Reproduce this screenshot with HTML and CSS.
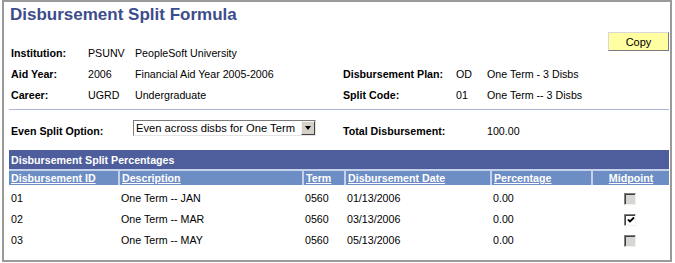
FILE: index.html
```html
<!DOCTYPE html>
<html lang="en">
<head>
    <meta charset="UTF-8">
    <title>Disbursement Split Formula</title>
    <link rel="stylesheet" href="styles.css">
</head>
<body>

    <div class="page">
        <h1 class="page-title">Disbursement Split Formula</h1>

        <div class="info">
            <button type="button" class="copy-btn">Copy</button>

            <span class="label first">Institution:</span>
            <span class="first">PSUNV</span>
            <span class="first">PeopleSoft University</span>

            <span class="label">Aid Year:</span>
            <span>2006</span>
            <span>Financial Aid Year 2005-2006</span>
            <span class="label">Disbursement Plan:</span>
            <span>OD</span>
            <span>One Term - 3 Disbs</span>

            <span class="label">Career:</span>
            <span>UGRD</span>
            <span>Undergraduate</span>
            <span class="label">Split Code:</span>
            <span>01</span>
            <span>One Term -- 3 Disbs</span>
        </div>

        <div class="divider"></div>

        <div class="split-row">
            <span class="label split-label">Even Split Option:</span>
            <div class="dropdown">
                <span class="dropdown-text">Even across disbs for One Term</span>
                <span class="dropdown-arrow"></span>
            </div>
            <span class="label split-label">Total Disbursement:</span>
            <span class="split-label">100.00</span>
        </div>

        <table class="grid">
            <colgroup>
                <col style="width:109px">
                <col style="width:184px">
                <col style="width:42px">
                <col style="width:146px">
                <col style="width:101px">
                <col style="width:78px">
            </colgroup>
            <thead>
                <tr>
                    <th colspan="6" class="grid-title">Disbursement Split Percentages</th>
                </tr>
                <tr class="col-heads">
                    <th><a href="#">Disbursement ID</a></th>
                    <th><a href="#">Description</a></th>
                    <th><a href="#">Term</a></th>
                    <th><a href="#">Disbursement Date</a></th>
                    <th><a href="#">Percentage</a></th>
                    <th class="center"><a href="#">Midpoint</a></th>
                </tr>
            </thead>
            <tbody>
                <tr class="first-row">
                    <td>01</td>
                    <td>One Term -- JAN</td>
                    <td>0560</td>
                    <td>01/13/2006</td>
                    <td>0.00</td>
                    <td class="center"><span class="check disabled"></span></td>
                </tr>
                <tr>
                    <td>02</td>
                    <td>One Term -- MAR</td>
                    <td>0560</td>
                    <td>03/13/2006</td>
                    <td>0.00</td>
                    <td class="center">
                        <span class="check checked">
                            <svg width="8" height="8" viewBox="0 0 8 8"><path d="M1 3.5 L3 5.5 L7 1.5" fill="none" stroke="#000" stroke-width="1.8"/></svg>
                        </span>
                    </td>
                </tr>
                <tr>
                    <td>03</td>
                    <td>One Term -- MAY</td>
                    <td>0560</td>
                    <td>05/13/2006</td>
                    <td>0.00</td>
                    <td class="center"><span class="check disabled"></span></td>
                </tr>
            </tbody>
        </table>
    </div>

</body>
</html>
```

FILE: styles.css
```css
body {
    margin: 0;
    padding: 0;
    background: white;
    font-family: "Liberation Sans", Arial, sans-serif;
    font-size: 10.67px;
    color: black;
}
.page {
    box-sizing: border-box;
    width: 670px;
    height: 262px;
    margin-left: 2px;
    border: 2px solid #9a9a9a;
}
.page-title {
    margin: 0;
    padding: 3px 0 0 6px;
    font-size: 17px;
    line-height: 20px;
    font-weight: bold;
    color: #3d4d8c;
}
.info {
    display: grid;
    grid-template-columns: 77px 47px 208px 113px 31px 1fr;
    grid-template-rows: 32px 21px 21px;
    margin: 7px 0 0 7px;
    line-height: 21px;
}
.info .first {
    grid-row: 1;
    align-self: end;
}
.label {
    font-weight: bold;
}
.copy-btn {
    grid-row: 1;
    grid-column: 4 / -1;
    justify-self: end;
    align-self: start;
    width: 61px;
    height: 19px;
    margin-right: 1px;
    padding: 0;
    font-family: inherit;
    font-size: 11px;
    color: black;
    background: #ffffa2;
    border: 1px solid;
    border-color: #d8d8d8 #7a7a7a #7a7a7a #d8d8d8;
}
.divider {
    height: 1px;
    margin: 3px 1px 0 5px;
    background: #aab4d8;
}
.split-row {
    display: grid;
    grid-template-columns: 122px 210px 144px 1fr;
    align-items: start;
    height: 40px;
    margin-left: 7px;
}
.split-label {
    margin-top: 14px;
    line-height: 14px;
}
.dropdown {
    display: flex;
    box-sizing: border-box;
    width: 183px;
    height: 16px;
    margin-top: 10px;
    border: 1px solid;
    border-color: #7a7a7a #e4e4e4 #e4e4e4 #7a7a7a;
    background: white;
}
.dropdown-text {
    flex: 1;
    padding-left: 2px;
    line-height: 14px;
    font-size: 11.2px;
}
.dropdown-arrow {
    position: relative;
    box-sizing: border-box;
    width: 14px;
    height: 14px;
    background: #d4d0c8;
    border: 1px solid;
    border-color: #f4f4f4 #404040 #404040 #f4f4f4;
}
.dropdown-arrow::after {
    content: "";
    position: absolute;
    left: 3px;
    top: 4px;
    border-left: 3.5px solid transparent;
    border-right: 3.5px solid transparent;
    border-top: 4px solid black;
}
.grid {
    width: 660px;
    margin-left: 5px;
    border-collapse: separate;
    border-spacing: 0;
    table-layout: fixed;
}
.grid th {
    padding: 0 0 0 2px;
    text-align: left;
    font-weight: bold;
    color: white;
}
.grid-title {
    height: 19px;
    background: #4e5e9c;
    font-size: 10.67px;
}
.col-heads th {
    height: 14px;
    line-height: 14px;
    background: #6d8ec4;
    border-top: 2px solid #c6d2ea;
    border-left: 2px solid #c6d2ea;
}
.col-heads th:first-child {
    border-left: none;
}
.col-heads a {
    color: white;
}
.grid td {
    padding: 0 0 0 3px;
    line-height: 21px;
    white-space: nowrap;
}
.grid td:first-child {
    padding-left: 2px;
}
.first-row td {
    padding-top: 3px;
}
.grid .center {
    text-align: center;
    padding-left: 0;
}
.check {
    display: inline-block;
    box-sizing: border-box;
    width: 12px;
    height: 12px;
    vertical-align: middle;
    border: 1px solid;
    border-color: #808080 #f0f0f0 #f0f0f0 #808080;
    box-shadow: inset 1px 1px 0 #404040;
    line-height: 0;
}
.check.disabled {
    background: #d6d6d2;
}
.check.checked {
    background: white;
}
.check svg {
    margin: 1px 0 0 1px;
}
```
